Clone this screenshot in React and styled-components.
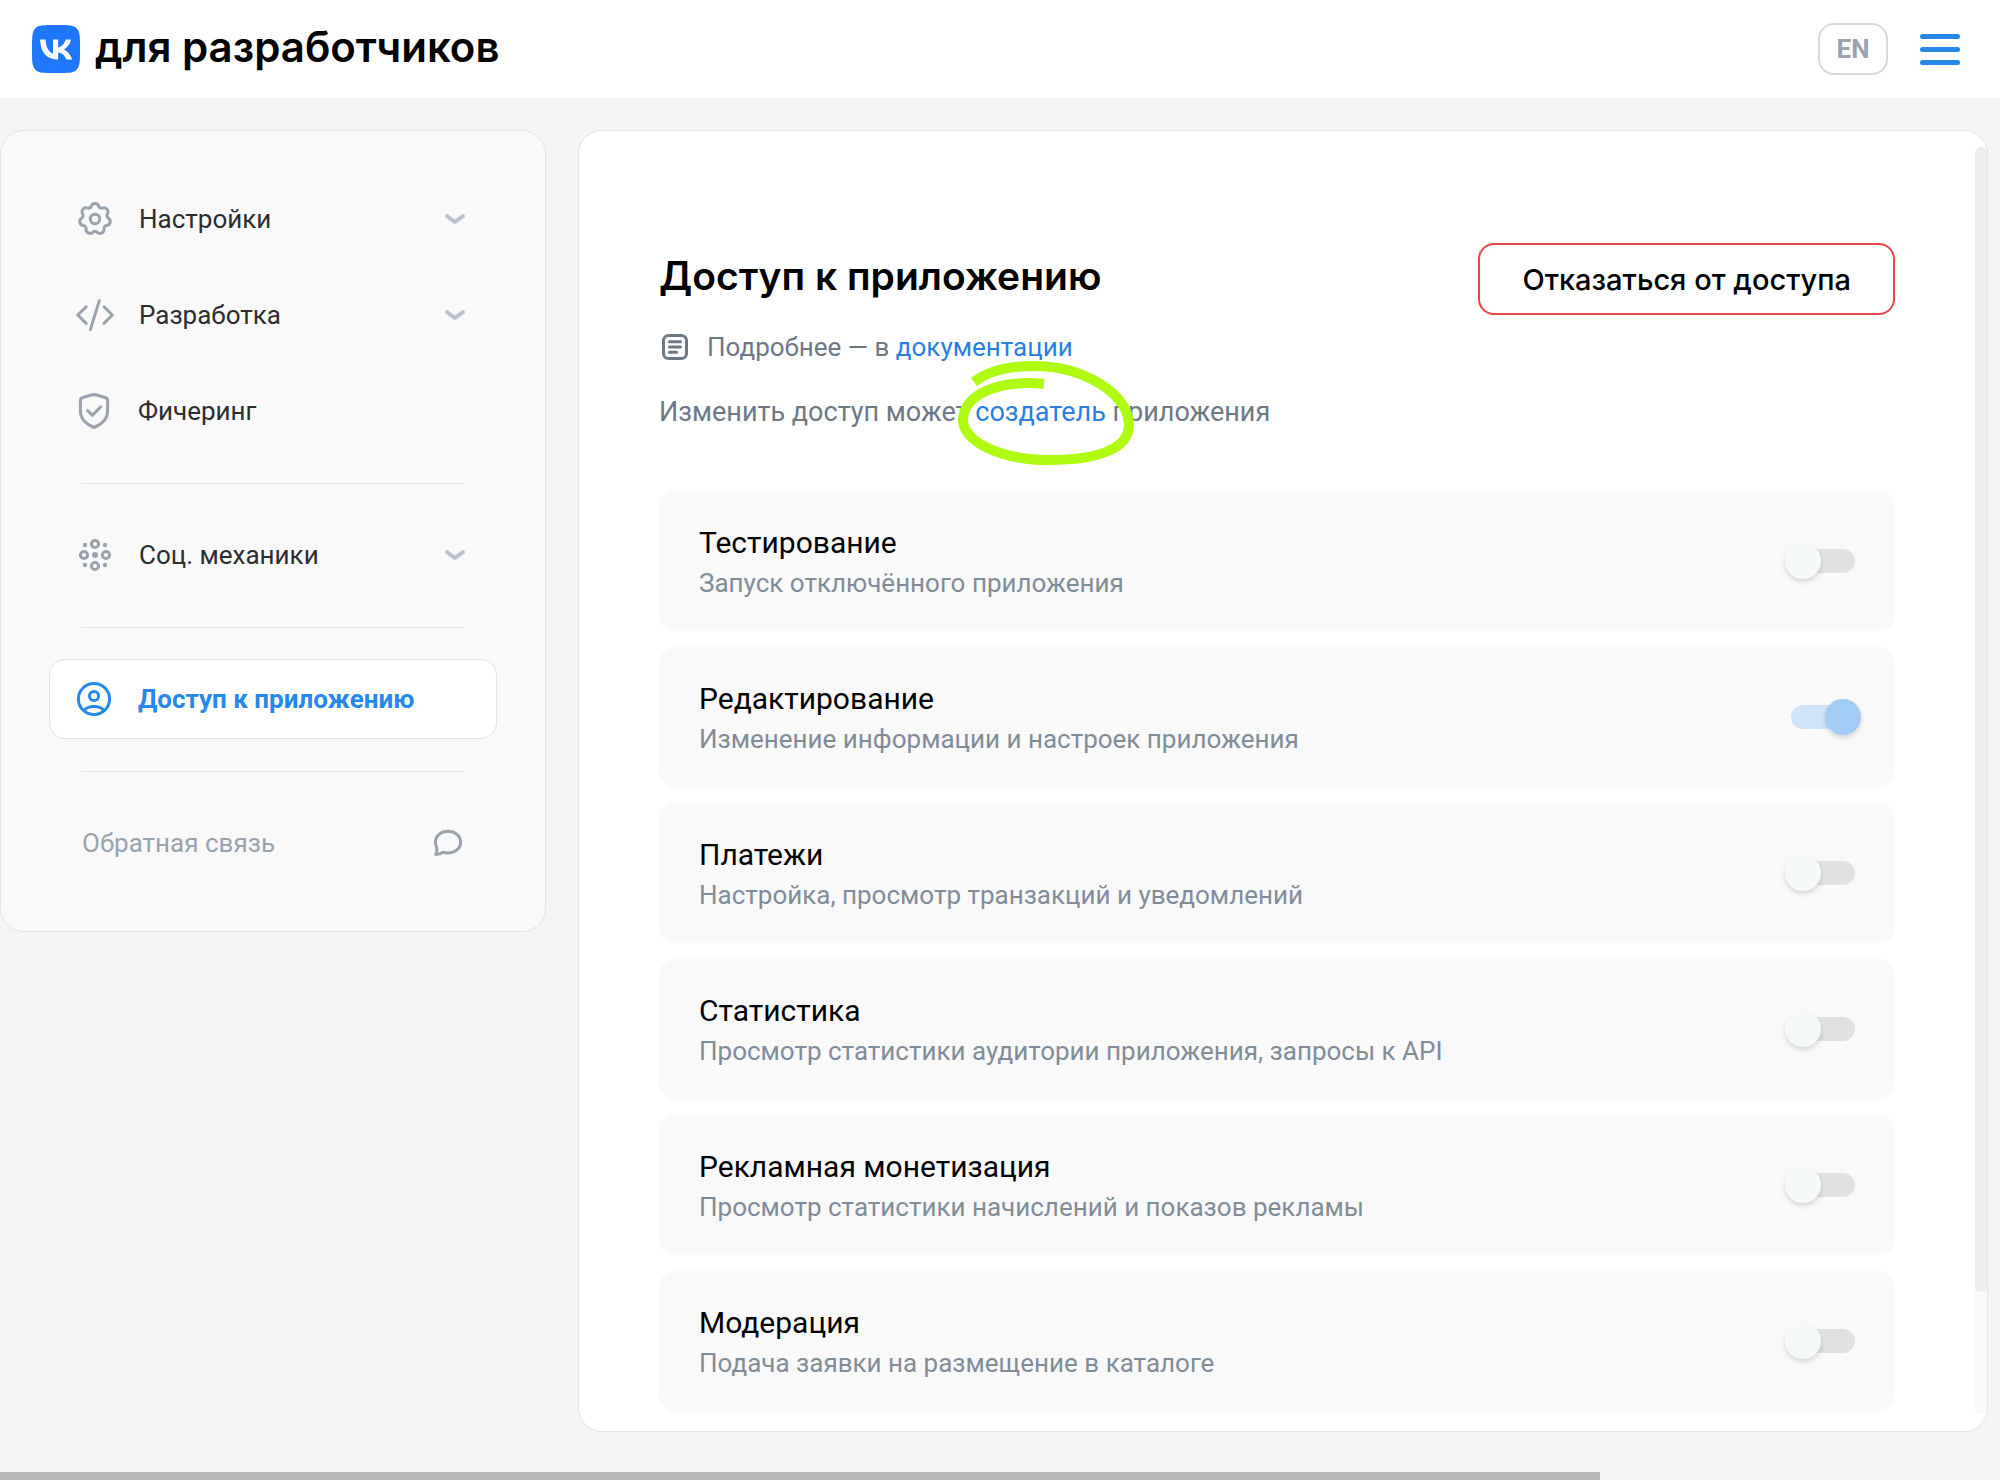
import React, { useState } from "react";
import styled, { createGlobalStyle } from 'styled-components';
import { SiVk } from 'react-icons/si';

const GlobalStyle = createGlobalStyle`
  * {
    box-sizing: border-box;
  }
  body {
    margin: 0;
    background: #f4f4f4;
    font-family: Roboto, "Liberation Sans", sans-serif;
  }
  button {
    font: inherit;
    cursor: pointer;
  }
`;

const Page = styled.div`
  display: flex;
  flex-direction: column;
  min-height: 100vh;
`;
const Header = styled.header`
  display: flex;
  align-items: center;
  justify-content: space-between;
  height: 100px;
  padding: 0 40px 0 32px;
  background: white;
  border-bottom: 2px solid #f0f0f6;
`;
const Brand = styled.a`
  display: flex;
  align-items: center;
  gap: 15px;
  color: black;
  text-decoration: none;
`;
const BrandName = styled.span`
  padding-bottom: 4px;
  font-family: Inter, sans-serif;
  font-size: 42px;
  font-weight: 600;
  line-height: 48px;
`;
const HeaderActions = styled.div`
  display: flex;
  align-items: center;
  gap: 32px;
`;
const LangButton = styled.button`
  width: 70px;
  height: 52px;
  padding: 0;
  border: 2px solid #d9d9d9;
  border-radius: 16px;
  background: white;
  color: #99a2ad;
  font-size: 26px;
  font-weight: 700;
`;
const MenuButton = styled.button`
  display: flex;
  flex-direction: column;
  gap: 8px;
  width: 40px;
  padding: 0;
  border: none;
  background: none;
`;
const MenuBar = styled.span`
  height: 5px;
  border-radius: 3px;
  background: #2688eb;
`;

const Body = styled.div`
  display: flex;
  flex: 1;
  align-items: flex-start;
  gap: 32px;
  padding: 30px 12px 40px 0;
`;
const Sidebar = styled.nav`
  display: flex;
  flex-direction: column;
  flex: none;
  gap: 16px;
  width: 546px;
  padding: 48px;
  border: 1px solid #e1e3e6;
  border-radius: 24px;
  background: #f9f9f9;
`;
const itemStyle = `
  display: flex;
  align-items: center;
  gap: 24px;
  height: 80px;
  border-radius: 16px;
  font-size: 26px;
  line-height: 32px;
  text-align: left;
  text-decoration: none;
`;
const GroupButton = styled.button`
  ${itemStyle}
  padding: 0 30px 0 26px;
  border: none;
  background: none;
  color: #2c2d2e;
`;
const ItemLink = styled.a`
  ${itemStyle}
  padding: 0 24px;
  border: 1px solid ${props => props.$active ? '#e1e3e6' : 'transparent'};
  background: ${props => props.$active ? 'white' : 'none'};
  color: ${props => props.$active ? '#2688eb' : '#2c2d2e'};
  font-weight: ${props => props.$active ? 700 : 400};
`;
const FeedbackLink = styled.a`
  ${itemStyle}
  justify-content: space-between;
  padding: 0 33px;
  color: #99a2ad;
`;
const ItemText = styled.span`
  flex: 1;
`;
const Divider = styled.hr`
  width: 384px;
  height: 1px;
  margin: 16px 32px 15px;
  border: none;
  background: #e1e3e6;
`;
const LineIcon = styled.svg`
  flex: none;
  fill: none;
  stroke: ${props => props.$color || '#99a2ad'};
  stroke-width: ${props => props.$weight || 3};
  stroke-linecap: round;
  stroke-linejoin: round;
`;

const Panel = styled.main`
  display: flex;
  flex: 1;
  min-width: 0;
  border: 1px solid #e1e3e6;
  border-radius: 24px;
  background: white;
  overflow: hidden;
`;
const Content = styled.div`
  flex: 1;
  min-width: 0;
  padding: 112px 80px 20px;
`;
const ScrollTrack = styled.div`
  flex: none;
  width: 12px;
  margin: 16px 0;
  border-radius: 6px;
  background: #f9f9f9;
`;
const ScrollThumb = styled.div`
  height: calc(100% - 123px);
  border-radius: 6px;
  background: #ebecf0;
`;
const PageScroll = styled.div`
  width: 80%;
  height: 8px;
  background: #bababa;
`;
const Top = styled.div`
  display: flex;
  align-items: flex-start;
  justify-content: space-between;
  margin-bottom: 59px;
`;
const Intro = styled.div`
  padding-top: 9px;
  color: #6d7885;
  font-size: 26px;
  line-height: 40px;
`;
const Title = styled.h1`
  margin: 0 0 27px;
  color: black;
  font-family: Inter, sans-serif;
  font-size: 39px;
  font-weight: 600;
  line-height: 48px;
`;
const Docs = styled.p`
  display: flex;
  align-items: center;
  gap: 16px;
  margin: 0 0 25px;
`;
const Note = styled.p`
  margin: 0;
  font-size: 27px;
`;
const TextLink = styled.a`
  color: #2a7fe0;
  text-decoration: none;
`;
const Marked = styled.span`
  display: inline-block;
  position: relative;
`;
const Marker = styled.svg`
  position: absolute;
  top: -32px;
  left: -18px;
  fill: none;
  stroke: #aefa10;
  stroke-width: 10;
  pointer-events: none;
`;
const RefuseButton = styled.button`
  flex: none;
  height: 72px;
  padding: 0 42px;
  border: 2px solid #e64646;
  border-radius: 16px;
  background: white;
  color: black;
  font-family: Inter, sans-serif;
  font-size: 29px;
  font-weight: 500;
`;

const List = styled.div`
  display: flex;
  flex-direction: column;
  gap: 16px;
`;
const Row = styled.label`
  display: flex;
  align-items: center;
  justify-content: space-between;
  height: 140px;
  padding: 0 40px;
  border-radius: 16px;
  background: #f9f9f9;
  line-height: 40px;
`;
const RowInfo = styled.div`
  padding-top: 4px;
`;
const RowTitle = styled.div`
  color: black;
  font-size: 30px;
`;
const RowText = styled.div`
  color: #818c99;
  font-size: 26px;
`;
const Switch = styled.input`
  appearance: none;
  display: flex;
  align-items: center;
  flex: none;
  width: 64px;
  height: 24px;
  margin: 0;
  border-radius: 12px;
  background: #e1e1e1;

  &::before {
    content: '';
    flex: none;
    width: 36px;
    height: 36px;
    margin: 0 -6px;
    border-radius: 50%;
    background: #f5f8f8;
    box-shadow: 0 3px 5px rgba(0, 0, 0, 0.14);
  }
  &:checked {
    justify-content: flex-end;
    background: #cfe4f8;
  }
  &:checked::before {
    background: #a2ccf4;
  }
`;

// seven rounded teeth joined by small notches
function gearPath() {
  const point = (deg) => {
    const a = deg * Math.PI / 180;
    return (20 + 13.5 * Math.cos(a)).toFixed(2) + ' ' + (20 + 13.5 * Math.sin(a)).toFixed(2);
  };
  const step = 360 / 7;
  let d = 'M' + point(-106);
  for (let i = 0; i < 7; i++) {
    const a = -90 + step * i;
    d += ' A4 4 0 0 1 ' + point(a + 16);
    d += ' A3 3 0 0 0 ' + point(a + step - 16);
  }
  return d + 'Z';
}

const icons = {
  gear: (
    <>
      <path d={gearPath()} />
      <circle cx="20" cy="20" r="4.7" />
    </>
  ),
  code: <path d="M11.2 11.8 2.8 20l8.4 8.4M24.3 5.6l-8.9 29M29 11.8l8.3 8.2-8.3 8.4" />,
  shield: (
    <>
      <path d="M20 3.5c4 .6 9 2.3 12.3 3.5.8.3 1.3.9 1.3 1.7V20c0 8-6.5 13.5-13.6 16.5C12.9 33.5 6.4 28 6.4 20V8.7c0-.8.5-1.4 1.3-1.7C11 5.8 16 4.1 20 3.5z" />
      <path d="m13.6 19.6 4.9 4.7 8.3-8.5" />
    </>
  ),
  social: (
    <>
      <circle cx="20" cy="9" r="3.6" />
      <circle cx="20" cy="31" r="3.6" />
      <circle cx="9" cy="20" r="3.6" />
      <circle cx="31" cy="20" r="3.6" />
      <g fill="#99a2ad" stroke="none">
        <circle cx="20" cy="20" r="3" />
        <circle cx="10" cy="10" r="2.2" />
        <circle cx="30" cy="10" r="2.2" />
        <circle cx="10" cy="30" r="2.2" />
        <circle cx="30" cy="30" r="2.2" />
      </g>
    </>
  ),
  user: (
    <>
      <circle cx="20" cy="20" r="15.6" />
      <circle cx="20" cy="17" r="4.6" />
      <path d="M10.3 31.5c2-2.8 6-3.9 9.7-3.9s7.7 1.1 9.7 3.9" />
    </>
  ),
};

function NavIcon({ name, color }) {
  return (
    <LineIcon width="40" height="40" viewBox="0 0 40 40" $color={color} aria-hidden="true">
      {icons[name]}
    </LineIcon>
  );
}

function NavGroup({ icon, children }) {
  return (
    <GroupButton type="button">
      <NavIcon name={icon} />
      <ItemText>{children}</ItemText>
      <LineIcon width="24" height="24" viewBox="0 0 24 24" $color="#b8c1cc" $weight={4} aria-hidden="true">
        <path d="m4 9.2 8 5.8 8-5.8" />
      </LineIcon>
    </GroupButton>
  );
}

const initialRights = [
  { title: 'Тестирование', text: 'Запуск отключённого приложения', on: false },
  { title: 'Редактирование', text: 'Изменение информации и настроек приложения', on: true },
  { title: 'Платежи', text: 'Настройка, просмотр транзакций и уведомлений', on: false },
  { title: 'Статистика', text: 'Просмотр статистики аудитории приложения, запросы к API', on: false },
  { title: 'Рекламная монетизация', text: 'Просмотр статистики начислений и показов рекламы', on: false },
  { title: 'Модерация', text: 'Подача заявки на размещение в каталоге', on: false },
];

export default function App() {
  const [rights, setRights] = useState(initialRights);

  const toggle = (idx) => {
    setRights(rights.map((e, i) => i === idx ? { ...e, on: !e.on } : e));
  };

  return (
    <Page>
      <GlobalStyle />
      <Header>
        <Brand href="#">
          <SiVk size={48} color="#1f77ff" aria-label="VK" />
          <BrandName>для разработчиков</BrandName>
        </Brand>
        <HeaderActions>
          <LangButton type="button">EN</LangButton>
          <MenuButton type="button" aria-label="Меню">
            <MenuBar />
            <MenuBar />
            <MenuBar />
          </MenuButton>
        </HeaderActions>
      </Header>
      <Body>
        <Sidebar>
          <NavGroup icon="gear">Настройки</NavGroup>
          <NavGroup icon="code">Разработка</NavGroup>
          <ItemLink href="#">
            <NavIcon name="shield" />
            Фичеринг
          </ItemLink>
          <Divider />
          <NavGroup icon="social">Соц. механики</NavGroup>
          <Divider />
          <ItemLink href="#" $active>
            <NavIcon name="user" color="#2688eb" />
            Доступ к приложению
          </ItemLink>
          <Divider />
          <FeedbackLink href="#">
            Обратная связь
            <LineIcon width="32" height="32" viewBox="0 0 32 32" aria-hidden="true">
              <path d="M16 4.3c7 0 12.6 4.7 12.6 10.9S23 26.1 16 26.1c-1.8 0-3.5-.3-5-.9-1.5 1.2-3.8 2.3-7.3 2.4 1.2-2 1.7-4.2 1-7.2-.8-1.5-1.3-3.3-1.3-5.2C3.4 9 9 4.3 16 4.3z" />
            </LineIcon>
          </FeedbackLink>
        </Sidebar>
        <Panel>
          <Content>
            <Top>
              <Intro>
                <Title>Доступ к приложению</Title>
                <Docs>
                  <LineIcon width="32" height="32" viewBox="0 0 32 32" $color="#6d7885" aria-hidden="true">
                    <rect x="4.5" y="4.5" width="23" height="23" rx="5" />
                    <path d="M10.5 10.8h11M10.5 16h11M10.5 21.2h7" />
                  </LineIcon>
                  <span>Подробнее — в <TextLink href="#">документации</TextLink></span>
                </Docs>
                <Note>
                  Изменить доступ может{' '}
                  <Marked>
                    <TextLink href="#">создатель</TextLink>
                    <Marker width="180" height="106" viewBox="0 0 180 106" aria-hidden="true">
                      <path d="M17 22C32 10 53 6 77 6c48 0 95 27 95 59 0 24-32 35-79 35C40 100 6 80 6 60c0-23 31-41 81-36" />
                    </Marker>
                  </Marked>
                  {' '}приложения
                </Note>
              </Intro>
              <RefuseButton type="button">Отказаться от доступа</RefuseButton>
            </Top>
            <List>
              {rights.map((e, idx) => (
                <Row key={'right' + idx}>
                  <RowInfo>
                    <RowTitle>{e.title}</RowTitle>
                    <RowText>{e.text}</RowText>
                  </RowInfo>
                  <Switch type="checkbox" role="switch" checked={e.on} onChange={() => toggle(idx)} />
                </Row>
              ))}
            </List>
          </Content>
          <ScrollTrack>
            <ScrollThumb />
          </ScrollTrack>
        </Panel>
      </Body>
      <PageScroll />
    </Page>
  );
}
